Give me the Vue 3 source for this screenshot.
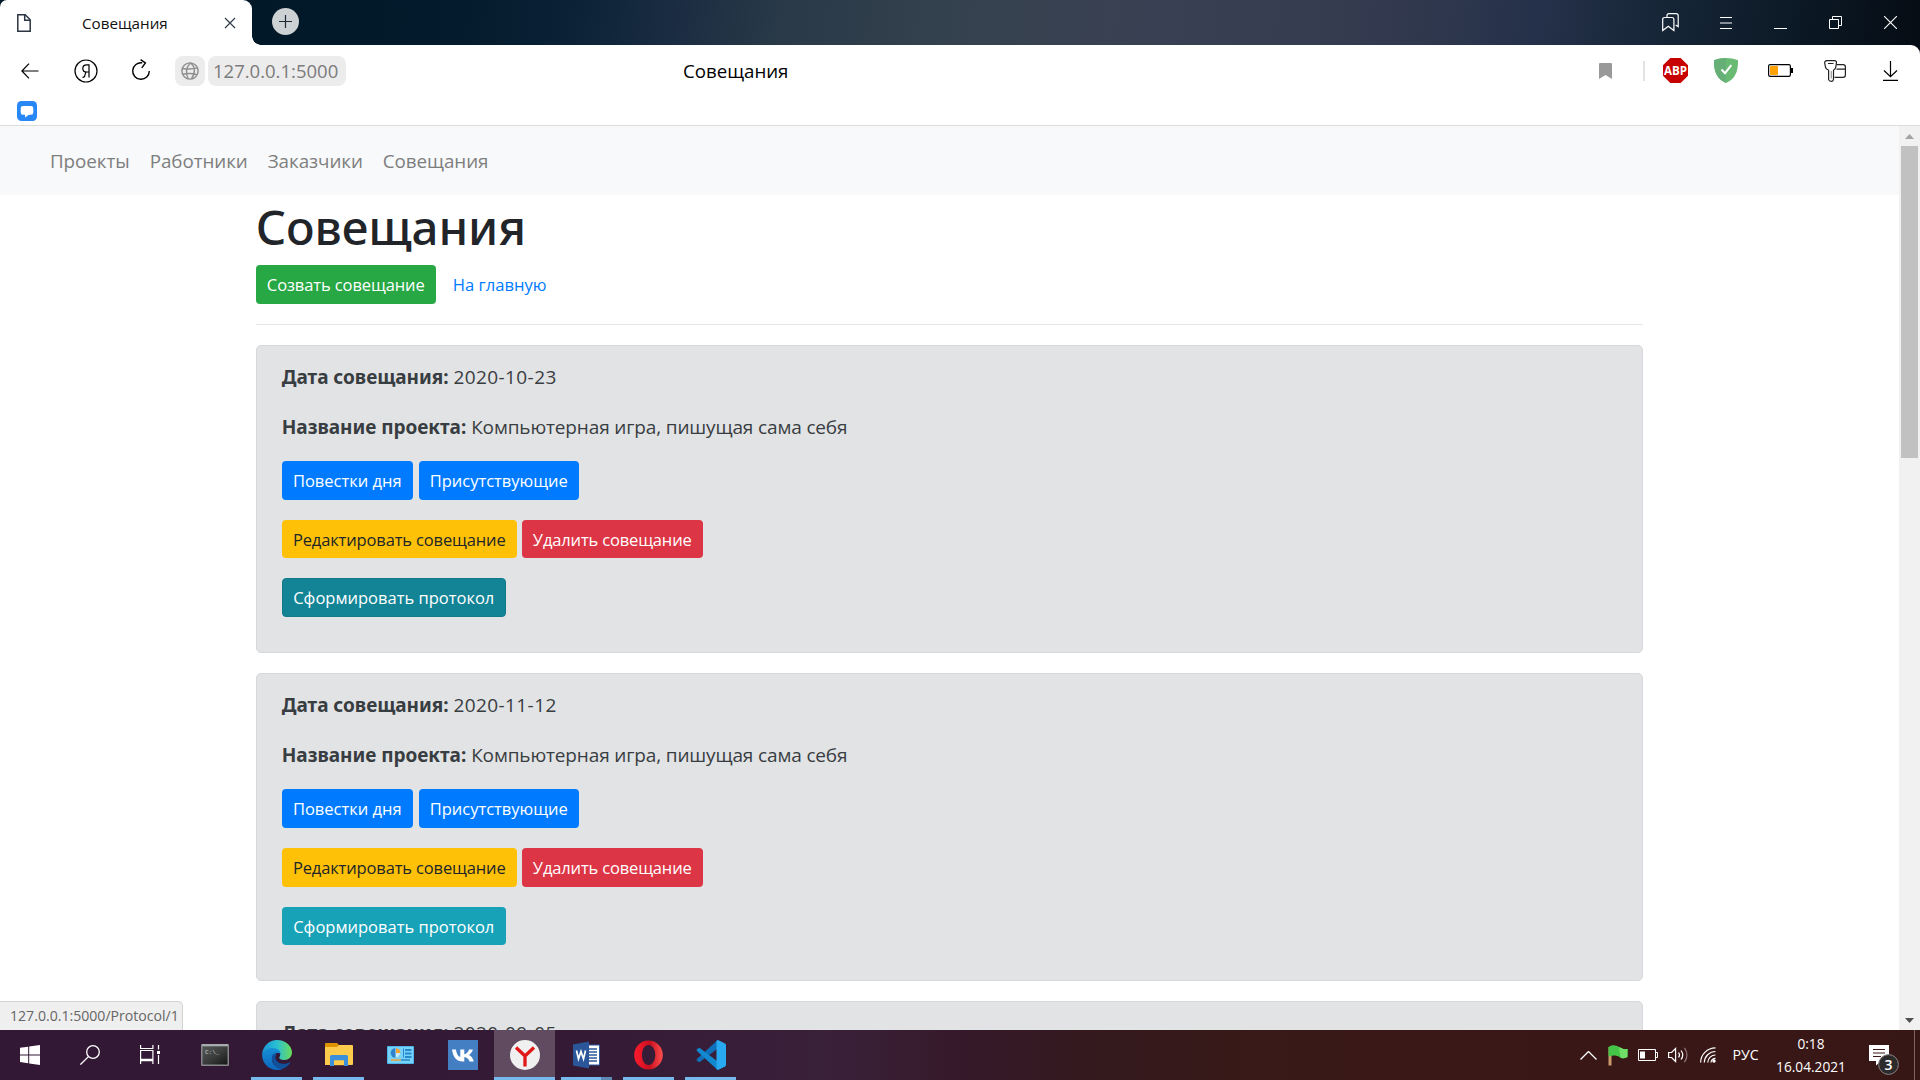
<script setup>
const navLinks = ['Проекты', 'Работники', 'Заказчики', 'Совещания']

const meetings = [
  { date: '2020-10-23', project: 'Компьютерная игра, пишущая сама себя', hovered: true },
  { date: '2020-11-12', project: 'Компьютерная игра, пишущая сама себя', hovered: false },
  { date: '2020-09-05', project: '', hovered: false }
]
</script>

<template>
  <div class="screen">
    <header class="titlebar">
      <div class="tab">
        <svg class="tab-doc" width="14" height="18" viewBox="0 0 14 18" fill="none" stroke="#2c3543" stroke-width="1.5">
          <path d="M.8.8h7.4l5 5v11.4H.8z" /><path d="M7.7.8v5.4h5.4" />
        </svg>
        <span class="tab-title">Совещания</span>
        <svg class="tab-close" width="12" height="12" viewBox="0 0 12 12" stroke="#333d49" stroke-width="1.2">
          <path d="M1 1l10 10M11 1L1 11" />
        </svg>
      </div>
      <span class="tab-corner"></span>
      <span class="new-tab">
        <svg width="13" height="13" viewBox="0 0 13 13" stroke="#1c2a35" stroke-width="1.2"><path d="M6.5 0v13M0 6.5h13" /></svg>
      </span>
      <div class="window-controls">
        <span class="cell">
          <svg width="17" height="19" viewBox="0 0 17 19" fill="none" stroke="#fff" stroke-width="1.2">
            <path d="M.7 17.6V6.5q0-2 2-2h7.2q2 0 2 2v11.1l-3-2.3-2.6-2-2.600 2z" />
            <path d="M5 4V2.7q0-2 2-2h7q2.2 0 2.2 2v10.900l-2.600-1.600" />
          </svg>
        </span>
        <span class="cell">
          <svg width="12" height="12" viewBox="0 0 12 12" stroke="#fff" stroke-width="1"><path d="M0 .5h12M0 6h12M0 11.5h12" /></svg>
        </span>
        <span class="cell">
          <svg width="13" height="13" viewBox="0 0 13 13" stroke="#fff" stroke-width="1"><path d="M0 12.5h13" /></svg>
        </span>
        <span class="cell">
          <svg width="13" height="13" viewBox="0 0 13 13" fill="none" stroke="#fff" stroke-width="1"><path d="M.5 3.5h9v9h-9zM3.5 3.5v-3h9v9h-3" /></svg>
        </span>
        <span class="cell">
          <svg width="13" height="13" viewBox="0 0 13 13" stroke="#fff" stroke-width="1.1"><path d="M0 0l13 13M13 0L0 13" /></svg>
        </span>
      </div>
    </header>

    <div class="toolbar-wrap">
      <div class="toolbar">
        <svg class="back" width="18" height="16" viewBox="0 0 18 16" fill="none" stroke="#000" stroke-width="1.2"><path d="M8 .7L.9 8 8 15.3M.9 8H17.5" /></svg>
        <svg class="ya" width="24" height="24" viewBox="0 0 24 24" fill="none" stroke="#000" stroke-width="1.2">
          <circle cx="12" cy="12" r="11" /><path d="M15 18.5V5.8h-2.2c-2.5 0-4 1.5-4 3.6 0 2.2 1.5 3.6 4 3.6H15M12.2 13c-1.2 1.5-1.2 3.8-1.8 4.7-.4.6-1 .6-1.9.6" />
        </svg>
        <svg class="reload" width="20" height="22" viewBox="0 0 20 22" fill="none" stroke="#000" stroke-width="1.4">
          <path d="M11.2 3.8A8.3 8.3 0 1 0 18.3 12" /><path d="M9.6.7l4.8 3.3-3.6 4.900" />
        </svg>
        <span class="globe">
          <svg width="18" height="18" viewBox="0 0 18 18" fill="none" stroke="#8e8e8e" stroke-width="1.4">
            <circle cx="9" cy="9" r="8.1" /><path d="M9.8 1C4.5 5 4.5 12 7.5 17M9.8 1c4.5 4 4.5 10 .6 16M1.5 6.5c5 .8 10 .8 15-.6M1.5 12.3c5-1.2 10-1 14.5.4" />
          </svg>
        </span>
        <span class="address">127.0.0.1:5000</span>
        <span class="page-title">Совещания</span>
        <div class="extensions">
          <svg class="mark" width="13" height="16" viewBox="0 0 13 16" fill="#999"><path d="M0 1q0-1 1-1h11q1 0 1 1v15l-6.5-4L0 16z" /></svg>
          <span class="sep"></span>
          <span class="cell abp">
            <svg width="25" height="25" viewBox="0 0 25 25">
              <path d="M7.3 0h10.4L25 7.3v10.4L17.7 25H7.3L0 17.7V7.3z" fill="#c70000" />
              <text x="12.5" y="17" text-anchor="middle" textLength="23" lengthAdjust="spacingAndGlyphs" class="abp-text">ABP</text>
            </svg>
          </span>
          <span class="cell shield">
            <svg width="24" height="25" viewBox="0 0 24 25">
              <path d="M12 0c4 0 8 .8 12 2.3C24.3 14 21 21 12 25 3 21-.3 14 0 2.3 4 .8 8 0 12 0z" fill="#69bb73" />
              <path d="M12 0v25C3 21-.3 14 0 2.3 4 .8 8 0 12 0z" fill="#66b077" />
              <path d="M7.5 11.500l3.500 3.700 6.300-8" fill="none" stroke="#fff" stroke-width="2" />
            </svg>
          </span>
          <span class="cell">
            <svg width="25" height="13" viewBox="0 0 25 13"><rect x=".6" y=".6" width="21.8" height="11.8" rx="1.6" fill="#fff" stroke="#000" stroke-width="1.2" /><rect x="2" y="2" width="8" height="9" rx=".8" fill="#ffa200" /><path d="M23 4h2v5h-2z" /></svg>
          </span>
          <span class="cell passwords">
            <svg width="22" height="22" viewBox="0 0 22 22" fill="none" stroke="#222" stroke-width="1.2">
              <path d="M12.500 4.600h6.500q2.400 0 2.400 2.400v8q0 2.400-2.400 2.400h-8.500M12.500 9.200h8.500" />
              <path d="M3 .6h7.400q2.300 0 2 2.500l-.6 4q-.3 2-2.300 3.200v9q-.3 2-2.200 2.100-2.300 0-2.700-1.900v-9.200Q1.800 9.200 1.500 7.100l-.8-4Q.4.8 3 .6zM4 3.500h5.500" />
              <path d="M7.300 11v7.500" stroke="#999" />
            </svg>
          </span>
          <span class="cell">
            <svg width="15" height="20" viewBox="0 0 15 20" fill="none" stroke="#000" stroke-width="1.2"><path d="M7.5 0v15.500M1 9.500l6.500 6.200L14 9.500M0 19.300h15" /></svg>
          </span>
        </div>
      </div>
    </div>

    <div class="bookmarks">
      <svg width="20" height="20" viewBox="0 0 20 20"><rect width="20" height="20" rx="4.5" fill="#2787f5" /><path d="M6 5h8q2.300 0 2.300 2.300v4.200q0 2.300-2.300 2.300h-2L8 16.600v-2.800H6q-2.300 0-2.300-2.300V7.300Q3.700 5 6 5z" fill="#fff" /></svg>
    </div>

    <div class="viewport">
      <main class="page">
        <nav class="navbar">
          <a v-for="link in navLinks" :key="link">{{ link }}</a>
        </nav>
        <div class="container">
          <h1>Совещания</h1>
          <div class="actions">
            <a class="btn success">Созвать совещание</a>
            <a class="home">На главную</a>
          </div>
          <hr />
          <article v-for="m in meetings" :key="m.date" class="card">
            <p><b>Дата совещания:</b> <span class="date">{{ m.date }}</span></p>
            <template v-if="m.project">
              <p><b>Название проекта:</b> <span class="project">{{ m.project }}</span></p>
              <div class="row views">
                <a class="btn primary agenda">Повестки дня</a>
                <a class="btn primary people">Присутствующие</a>
              </div>
              <div class="row">
                <a class="btn warning">Редактировать совещание</a>
                <a class="btn danger">Удалить совещание</a>
              </div>
              <div class="row">
                <a class="btn info" :class="{ hovered: m.hovered }">Сформировать протокол</a>
              </div>
            </template>
          </article>
        </div>
      </main>
      <div class="scrollbar">
        <svg class="up" width="9" height="5" viewBox="0 0 9 5" fill="#a3a3a3"><path d="M4.5 0L9 5H0z" /></svg>
        <span class="thumb"></span>
        <svg class="down" width="9" height="5" viewBox="0 0 9 5" fill="#505050"><path d="M4.5 5L9 0H0z" /></svg>
      </div>
      <span class="status">127.0.0.1:5000/Protocol/1</span>
    </div>

    <footer class="taskbar">
      <span class="sys">
        <svg width="20" height="20" viewBox="0 0 20 20" fill="#fff"><path d="M0 2.8l8.200-1.100v7.700H0zM9.200 1.500L20 0v9.400H9.200zM0 10.400h8.200v7.800L0 17zM9.200 10.400H20V20L9.200 18.400z" /></svg>
      </span>
      <span class="sys">
        <svg width="20" height="20" viewBox="0 0 20 20" fill="none" stroke="#fff" stroke-width="1.3"><circle cx="13" cy="7" r="6.300" /><path d="M8.400 11.600L.4 19.600" /></svg>
      </span>
      <span class="sys">
        <svg width="20" height="20" viewBox="0 0 20 20" fill="none" stroke="#fff" stroke-width="1.2"><path d="M.6 0v3.500h12.300V0M.6 5.500h12.300v8.800H.6zM.6 19v-3.400h12.300V19M18.500 0v4.500M18.500 10v9" /><path d="M17 6h3v3h-3z" fill="#fff" stroke="none" /></svg>
      </span>
      <div class="apps">
        <span class="app">
          <svg width="28" height="22" viewBox="0 0 28 22"><defs><linearGradient id="cmd" x1="0" y1="0" x2="1" y2="1"><stop offset="0" stop-color="#555" /><stop offset=".5" stop-color="#3c3e3e" /><stop offset="1" stop-color="#151717" /></linearGradient></defs><rect width="28" height="22" rx="1" fill="#858789" /><rect x="1.5" y="2.5" width="25" height="18" fill="url(#cmd)" /><path d="M1 1h26" stroke="#b5b7b8" stroke-width="1.5" /><text x="4" y="9.500" class="cmd-text">C:\_</text></svg>
        </span>
        <span class="app open">
          <svg width="30" height="30" viewBox="0 0 30 30">
            <defs>
              <linearGradient id="eg" x1="0" y1=".5" x2="1" y2=".5"><stop offset="0" stop-color="#1a94d8" /><stop offset=".5" stop-color="#2bc0d2" /><stop offset="1" stop-color="#6bdc58" /></linearGradient>
              <linearGradient id="eb" x1="0" y1="0" x2="0" y2="1"><stop offset="0" stop-color="#168fd6" /><stop offset="1" stop-color="#0c65bc" /></linearGradient>
            </defs>
            <path d="M.1 14C.8 6 7.5 0 15 0c8.500 0 15 6 15 12.500 0 4.500-3.500 7.500-7.500 7.500-4 0-6-1.500-5-3 2-3 0-7-4.500-7.500C7 9 2 10.500.1 14z" fill="url(#eg)" />
            <path d="M.1 14C2 10 6.500 8 10.500 8c5 0 8.500 3 8.200 6.500C17 11.500 10 13 10 19.500c0 5 5 8 10 10-2 .5-3.500.5-5 .5C6.500 30-.3 23 .1 14z" fill="url(#eb)" />
            <path d="M10.500 15C8 21 13 28 19.500 29.200c3.500-.9 6.500-3.200 8.500-6 .5-.8 0-1.200-.7-.8-5 2.600-11.500 1.600-13.500-3.200-.7-1.800-.3-3.800 1-5.200-1.700-.5-3.600-.3-4.300 1z" fill="#13509c" />
          </svg>
        </span>
        <span class="app open">
          <svg class="folder" width="28" height="23" viewBox="0 0 28 23"><path d="M0 1q0-1 1-1h11l2 2v4H0z" fill="#dd9400" /><path d="M0 4h12l2-2h13q1 0 1 1v18q0 1-1 1H0z" fill="#fecb4c" /><path d="M5 23V13.500q0-1.500 1.500-1.500h15q1.500 0 1.500 1.500V23h-4v-5.500H9V23z" fill="#3b8fdb" /><path d="M9 17.500h10v4.700H9z" fill="#fecb4c" /></svg>
        </span>
        <span class="app">
          <svg width="27" height="18" viewBox="0 0 27 18"><rect width="27" height="18" rx="1" fill="#4cb5ec" /><rect x="1" y="1" width="25" height="16" fill="#78d3fa" /><circle cx="8.500" cy="7" r="4.800" fill="#2f83cc" /><path d="M8.500 7V2.200a4.800 4.800 0 0 1 0 9.600z" fill="#c2ebff" /><path d="M9 7V2.200A4.800 4.800 0 0 1 13.300 7z" fill="#f0a132" /><path d="M16 2.500h1v9h-1zM18 3h6.500v2H18zM18 6.500h6.500v2H18zM18 10h6.500v2H18z" fill="#2789cb" /><path d="M4 14h8" stroke="#f0a132" stroke-width="1.5" /><path d="M14 14h9" stroke="#2789cb" stroke-width="1.5" /><path d="M13 12.800v2.500" stroke="#f0a132" stroke-width="1.2" /></svg>
        </span>
        <span class="app">
          <svg width="30" height="30" viewBox="0 0 30 30"><rect width="30" height="30" fill="#437fc2" /><path d="M14.700 21.500c-6 0-9.700-4-10.700-12h3.900c.7 4.500 2.300 6.800 4.400 7.500v-7.500h4v4.700c2-.3 4-2.300 4.800-4.700h3.800c-.5 2.500-2.300 4.500-4 5.500 1.800.8 3.900 2.700 4.900 6.500h-4.200c-.8-2.400-2.700-4.200-5.300-4.500v4.500z" fill="#fff" /></svg>
        </span>
        <span class="app open active">
          <svg width="30" height="30" viewBox="0 0 30 30"><circle cx="15" cy="15" r="15" fill="#f0f0f0" /><path d="M6 7.500l9 8.500 9-8.500M15 15v11.500" fill="none" stroke="#e01818" stroke-width="3.300" /></svg>
        </span>
        <span class="app open stacked">
          <svg width="27" height="28" viewBox="0 0 27 28"><path d="M14 4h12.500v20H14z" fill="#fff" stroke="#2b579a" /><path d="M16 8h8M16 11h8M16 14h8M16 17h8M16 20h8" stroke="#2b579a" stroke-width="1.4" /><path d="M0 3.500L16 .5v27L0 24.500z" fill="#2b579a" /><path d="M3.500 9.500l2 8.500 2.500-7.500 2.500 7.500 2-8.500" fill="none" stroke="#fff" stroke-width="1.700" /></svg>
        </span>
        <span class="app open">
          <svg width="29" height="30" viewBox="0 0 29 30"><defs><linearGradient id="op" x1="0" y1="0" x2="1" y2="0"><stop offset="0" stop-color="#ff1b2d" /><stop offset=".55" stop-color="#c8101e" /><stop offset="1" stop-color="#ff4f4f" /></linearGradient></defs><path fill-rule="evenodd" d="M14.500.5a14.300 14.500 0 1 1 0 29 14.300 14.500 0 1 1 0-29zM14.500 5c-4 0-6.500 4.500-6.500 10s2.500 10 6.500 10 6.800-4.500 6.800-10S18.500 5 14.500 5z" fill="url(#op)" /></svg>
        </span>
        <span class="app open">
          <svg width="30" height="30" viewBox="0 0 30 30"><path d="M22 8.200L3.500 22.300 1.500 21.300Q-.2 20 1.200 18.800L20.800.8z" fill="#0f6fb8" /><path d="M22 21.800L3.500 7.700l-2 1Q-.2 10 1.200 11.200L20.800 29.200z" fill="#1188cf" /><path d="M22 .1l7 3.400q1 .5 1 1.700v19.600q0 1.200-1 1.700l-7 3.400z" fill="#29a9f2" /><path d="M20.500.8L22 .1v29.800l-1.500-.7z" fill="#29a9f2" /></svg>
        </span>
      </div>
      <div class="tray">
        <span class="tray-item"><svg width="17" height="9" viewBox="0 0 17 9" fill="none" stroke="#fff" stroke-width="1.3"><path d="M.5 8.500l8-8 8 8" /></svg></span>
        <span class="tray-item"><svg width="20" height="21" viewBox="0 0 20 21"><path d="M.5 2h3v18.500h-3z" fill="#c99a6c" /><path d="M.5 2C4-.8 8 0 11 2c3 1.500 4 2.500 8.500 2v8c-3.500 1.500-6 2-8 0-3-1.500-6-2-11-.5z" fill="#45c548" /><path d="M11 2c3 1.500 4 2.500 8.500 2v8c-3.500 1.500-5.500 1.500-7 .6z" fill="#6fdf67" /></svg></span>
        <span class="tray-item"><svg width="20" height="12" viewBox="0 0 20 12" fill="none" stroke="#fff"><path d="M.5.5h17v11H.5zM18 3.500h1.500v5H18" /><path d="M2 2.500h5v7H2z" fill="#fff" stroke="none" /></svg></span>
        <span class="tray-item"><svg width="20" height="16" viewBox="0 0 20 16" fill="none" stroke="#fff" stroke-width="1.2"><path d="M.6 5.500h3l4-4v13l-4-4h-3zM10.500 5.500q2 2.500 0 5M13 3.500q3.500 4.500 0 9" /><path d="M16.500.8q5 7.200 0 14.400" stroke="#917676" /></svg></span>
        <span class="tray-item"><svg width="16" height="16" viewBox="0 0 16 16" fill="none" stroke="#fff" stroke-width="1.2"><path d="M.6 15.500A15 15 0 0 1 15.500.8M4.300 15.500A11.200 11.200 0 0 1 15.500 4.500M7.800 15.500A7.700 7.700 0 0 1 15.500 8" /><path d="M11 15.500a4.500 4.500 0 0 1 4.500-4.200" /><circle cx="14" cy="14" r="1.7" fill="#fff" stroke="none" /></svg></span>
        <span class="lang">РУС</span>
        <span class="clock"><span>0:18</span><span>16.04.2021</span></span>
        <span class="notice">
          <svg width="30" height="30" viewBox="0 0 30 30"><path d="M0 0h20v16h-8l-5 4.500V16H0z" fill="#fff" /><path d="M4 4.500h12M4 8h12M4 11.500h8" stroke="#3a1818" stroke-width="1.2" /><circle cx="19.500" cy="19.500" r="9.900" fill="#2d2a2b" stroke="#8b8585" /><text x="19.500" y="24.600" text-anchor="middle" class="badge-text">3</text></svg>
        </span>
        <span class="desktop-edge"></span>
      </div>
    </footer>
  </div>
</template>

<style>
body {
  overflow: hidden;
}
</style>

<style scoped>
.screen {
  display: flex;
  flex-direction: column;
  width: 1920px;
  height: 1080px;
  overflow: hidden;
  background: #fff;
  font-family: "Open Sans", "Noto Sans", sans-serif;
  color: #212529;
}
.screen * {
  box-sizing: border-box;
}
.screen svg {
  display: block;
  flex: none;
}
.cell {
  display: flex;
  justify-content: center;
  align-items: center;
  width: 55px;
}

/* title bar */
.titlebar {
  display: flex;
  flex: none;
  height: 45px;
  background: linear-gradient(97deg, #001828 14%, #031b2c 24%, #0b2237 30%, #1a2c42 35%, #2a3a48 41%, #36424f 51%, #3a4053 61%, #333a4f 72%, #25314a 80%, #172638 86%, #0b1824 94%, #060c14 100%);
}
.tab {
  display: flex;
  align-items: center;
  width: 252px;
  padding: 0 16px 0 17px;
  background: #fff;
  border-radius: 7px 9px 0 0;
}
.tab-title {
  width: 88px;
  margin: 1px 0 0 51px;
  font-size: 15.2px;
  color: #111;
  white-space: nowrap;
}
.tab-close {
  margin-left: 54px;
}
.tab-corner {
  align-self: flex-end;
  width: 9px;
  height: 9px;
  background: radial-gradient(circle at 100% 0, transparent 8.5px, #fff 9px);
}
.new-tab {
  display: flex;
  align-items: center;
  justify-content: center;
  width: 27px;
  height: 27px;
  margin: 8px 0 0 11px;
  border-radius: 50%;
  background: #ccd1d4;
}
.window-controls {
  display: flex;
  height: 45px;
  margin-left: auto;
  padding-right: 2px;
}

/* toolbar */
.toolbar-wrap {
  flex: none;
  background: #060c14;
}
.toolbar {
  display: flex;
  align-items: center;
  height: 51px;
  background: #fff;
  border-top-right-radius: 9px;
}
.back {
  margin-left: 21px;
}
.ya {
  margin-left: 35px;
}
.reload {
  margin: -2px 0 0 33px;
}
.globe {
  display: flex;
  align-items: center;
  justify-content: center;
  width: 30px;
  height: 30px;
  margin-left: 24px;
  border-radius: 8px;
  background: #ececec;
}
.address {
  width: 138px;
  height: 30px;
  margin-left: 3px;
  padding-left: 5px;
  border-radius: 8px;
  background: #ececec;
  color: #7b7b7b;
  font-size: 18.5px;
  line-height: 30px;
  white-space: nowrap;
}
.page-title {
  margin-left: 337px;
  color: #000;
  font-size: 18.7px;
}
.extensions {
  display: flex;
  align-items: center;
  margin-left: auto;
  padding-right: 2px;
}
.sep {
  width: 2px;
  height: 20px;
  margin: 0 7px 0 31px;
  background: #e3e3e3;
}
.abp {
  width: 47px;
}
.shield {
  width: 54px;
}
.passwords {
  padding-right: 2px;
}
.abp-text {
  fill: #fff;
  font: 700 12px "Open Sans", sans-serif;
}
.bookmarks {
  flex: none;
  height: 30px;
  padding: 5px 17px 0;
  border-bottom: 1px solid #dcdcdc;
}

/* page */
.viewport {
  position: relative;
  display: flex;
  height: 904px;
  overflow: hidden;
}
.page {
  width: 1899px;
}
.navbar {
  display: flex;
  gap: 20px;
  height: 69px;
  padding: 21px 50px 0;
  background: #f8f9fa;
  color: #7d7e7e;
  font-size: 18.8px;
  line-height: 28px;
  letter-spacing: -.05px;
}
.container {
  width: 1387.5px;
  margin: 0 auto;
}
h1 {
  margin: 0;
  padding-top: 2px;
  height: 70px;
  font-family: "Noto Sans", sans-serif;
  font-size: 47.5px;
  font-weight: 500;
  line-height: 60px;
  letter-spacing: -.1px;
}
.actions {
  display: flex;
  align-items: center;
}
.btn {
  display: block;
  height: 38.75px;
  border-radius: 4px;
  color: #fff;
  font-size: 16.5px;
  line-height: 39px;
  text-align: center;
  white-space: nowrap;
}
.success {
  width: 180px;
  background: #28a745;
  letter-spacing: -.1px;
}
.home {
  margin-left: 17px;
  color: #007bff;
  font-size: 16.6px;
}
hr {
  height: 1px;
  margin: 20px 0;
  border: 0;
  background: #e5e5e5;
}
.card {
  height: 308.25px;
  margin-bottom: 20px;
  padding: 15px 25px;
  border: 1px solid #d6d8db;
  border-radius: 5px;
  background: #e2e3e5;
  color: #383d41;
  font-size: 19px;
}
.card p {
  height: 30px;
  margin: 0 0 20px;
  padding-top: 1px;
  line-height: 30px;
  white-space: nowrap;
}
.card b {
  font-family: "Noto Sans", sans-serif;
  letter-spacing: -.03px;
}
.date {
  letter-spacing: .4px;
}
.project {
  letter-spacing: -.14px;
}
.row {
  display: flex;
  gap: 5px;
  margin-bottom: 20px;
}
.views {
  gap: 6px;
}
.primary {
  background: #007bff;
}
.agenda {
  width: 131px;
}
.people {
  width: 160px;
}
.warning {
  width: 235px;
  background: #ffc107;
  color: #212529;
  letter-spacing: -.14px;
}
.danger {
  width: 181px;
  background: #dc3545;
  letter-spacing: -.15px;
}
.info {
  width: 224px;
  background: #17a2b8;
}
.hovered {
  border: 1px solid #117a8b;
  background: #138496;
  line-height: 37px;
}
.scrollbar {
  display: flex;
  flex-direction: column;
  align-items: center;
  width: 21px;
  background: #f1f1f1;
}
.up {
  margin-top: 8px;
}
.thumb {
  width: 17px;
  height: 312px;
  margin-top: 7px;
  background: #c1c1c1;
}
.down {
  margin: auto 0 7px;
}
.status {
  position: absolute;
  left: 0;
  bottom: 0;
  width: 183px;
  height: 29px;
  padding-left: 10px;
  border: solid #d3d3d3;
  border-width: 1px 1px 0 0;
  border-top-right-radius: 5px;
  background: #efefef;
  color: #666;
  font-size: 14.1px;
  line-height: 28px;
  white-space: nowrap;
}

/* taskbar */
.taskbar {
  display: flex;
  flex: none;
  height: 50px;
  background: linear-gradient(90deg, #321834 0, #341a35 30%, #3a213a 43%, #36192a 50%, #34191c 58%, #391a18 66%, #3a1717 80%, #371716 100%);
}
.sys {
  display: flex;
  align-items: center;
  justify-content: center;
  width: 60px;
}
.apps {
  display: flex;
  gap: 1px;
  margin-left: 4px;
}
.app {
  position: relative;
  display: flex;
  align-items: center;
  justify-content: center;
  width: 61px;
}
.folder {
  margin-top: -2px;
}
.app.open::after {
  content: "";
  position: absolute;
  left: 5px;
  right: 5px;
  bottom: 0;
  height: 3px;
  background: #76b9ed;
}
.app.active {
  background: #604b60;
}
.app.active::after {
  left: 0;
  right: 0;
}
.app.stacked::after {
  background: linear-gradient(90deg, #76b9ed 40px, #5b8bb5 40px);
}
.cmd-text {
  fill: #ccc;
  font: 6px "Liberation Mono", monospace;
}
.tray {
  display: flex;
  margin-left: auto;
  color: #fff;
}
.tray-item {
  display: flex;
  align-items: center;
  justify-content: center;
  width: 30px;
}
.lang {
  width: 45px;
  font-size: 14.2px;
  line-height: 50px;
  text-align: center;
}
.clock {
  display: flex;
  flex-direction: column;
  width: 86px;
  padding-top: 2px;
  font-size: 13.7px;
  line-height: 23px;
  text-align: center;
}
.notice {
  display: flex;
  justify-content: center;
  width: 60px;
  padding-top: 15px;
}
.badge-text {
  fill: #fff;
  font: 600 14px "Open Sans", sans-serif;
}
.desktop-edge {
  width: 6px;
  border-left: 1px solid #7d6666;
}
</style>
